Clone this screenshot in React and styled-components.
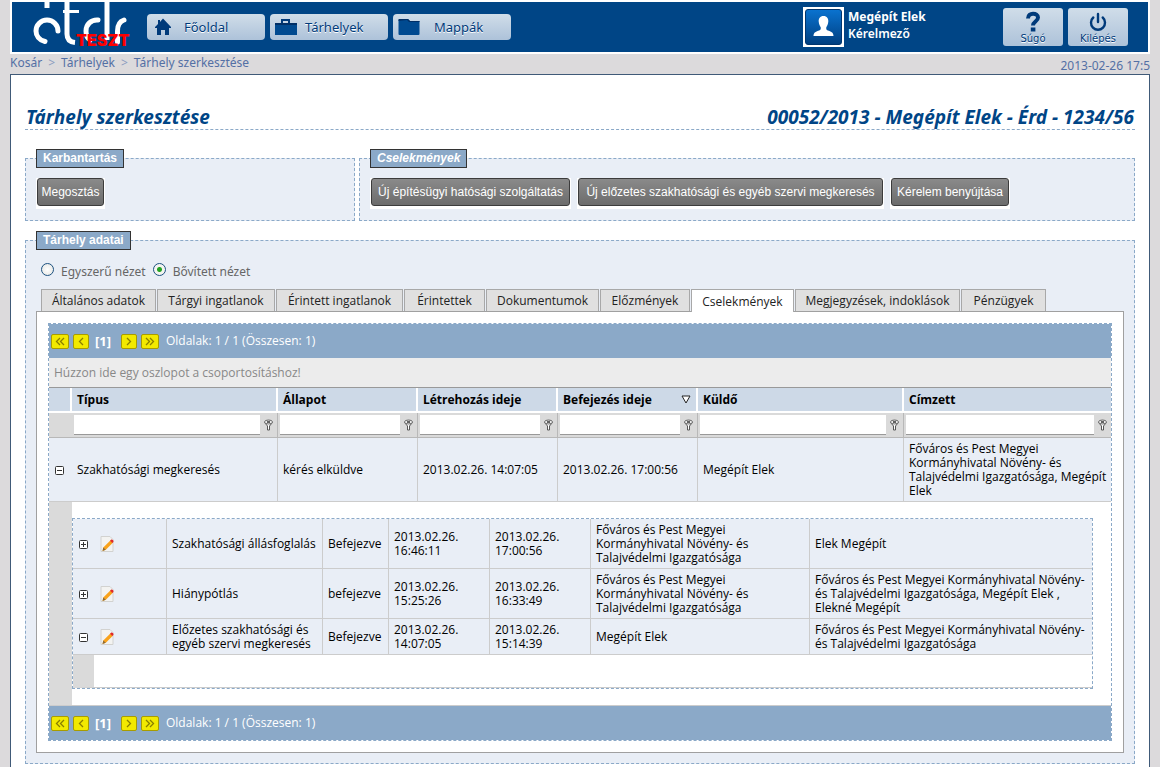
import { useState } from "react";
import styled, { createGlobalStyle, css } from "styled-components";

const GlobalStyle = createGlobalStyle`
  * {
    box-sizing: border-box;
  }

  body {
    margin: 0;
    background: #dcdadc;
    font-family: "Open Sans", Tahoma, sans-serif;
    font-size: 12px;
    line-height: 14px;
    color: #000;
  }

  button,
  input {
    font-family: inherit;
    font-size: inherit;
  }
`;

const Page = styled.div`
  display: flex;
  flex-direction: column;
  min-height: 100vh;
  padding: 0 10px;
`;

const Header = styled.header`
  display: flex;
  align-items: center;
  height: 54px;
  padding-right: 20px;
  background: #004586;
  border: 2px solid #fff;
  font-family: "Noto Sans", sans-serif;
`;

const Logo = styled.a`
  position: relative;
  flex: none;
  width: 135px;
  height: 50px;

  svg {
    display: block;
  }
`;

const LogoBadge = styled.span`
  position: absolute;
  left: 64px;
  top: 30px;
  color: #f00;
  font: 900 16px/16px Inter, "Liberation Sans", sans-serif;
`;

const Nav = styled.nav`
  display: flex;
  gap: 5px;
`;

const raised = css`
  border: 0;
  background: linear-gradient(#d0dde9, #adc2d9);
  color: #003a7a;
  text-shadow: 0 1px 0 #fff;
  cursor: pointer;
`;

const NavButton = styled.button`
  ${raised}
  display: flex;
  align-items: center;
  width: 118px;
  height: 26px;
  padding: 0;
  border-radius: 4px;
  font-size: 13px;

  svg {
    flex: none;
  }
`;

const NavLabel = styled.span`
  padding-left: ${(p) => p.$indent}px;
`;

const User = styled.div`
  display: flex;
  gap: 4px;
  width: 200px;
  margin-left: auto;
  color: #fff;
  font-size: 12px;
  font-weight: 700;
  line-height: 17px;
`;

const UserText = styled.div`
  padding-top: 1px;
`;

const Avatar = styled.span`
  width: 41px;
  height: 40px;
  padding: 2px;
  background: #fff;

  svg {
    display: block;
  }
`;

const UserRole = styled.div`
  font-weight: 600;
`;

const HeaderButtons = styled.div`
  display: flex;
  gap: 5px;
`;

const HeaderButton = styled.button`
  ${raised}
  display: flex;
  flex-direction: column;
  align-items: center;
  width: 60px;
  height: 38px;
  padding: 3px 0 0;
  border-radius: 3px;
  font: 10px/12px "DejaVu Sans", Verdana, sans-serif;
`;

const TopLine = styled.div`
  display: flex;
  justify-content: space-between;
  height: 20px;
  color: #5470a5;
  font-family: "Noto Sans", sans-serif;
  line-height: 18px;
`;

const Crumbs = styled.nav`
  a {
    color: inherit;
    text-decoration: none;
  }

  span {
    margin: 0 6px;
    color: #8b9cc0;
  }
`;

const Clock = styled.time`
  line-height: 24px;
`;

const Content = styled.main`
  flex: 1;
  padding: 31px 14px 3px;
  background: #fff;
  border: 1px solid #405a78;
  border-bottom: 0;
`;

const Titles = styled.div`
  display: flex;
  justify-content: space-between;
  margin-bottom: 19px;
  padding: 0 1px;
  border-bottom: 1px dashed #8ba9c8;
`;

const Title = styled.h1`
  margin: 0;
  color: #004586;
  font-family: "Noto Sans", sans-serif;
  font-size: 19px;
  font-style: italic;
  font-weight: 700;
  line-height: 23px;
`;

const BoxRow = styled.div`
  display: flex;
  gap: 4px;
  margin-bottom: 10px;
`;

const Box = styled.fieldset`
  flex: ${(p) => (p.$width ? `0 0 ${p.$width}px` : "1")};
  min-width: 0;
  margin: 0;
  padding: 10px;
  background: #e9eef6;
  border: 1px dashed #8ba9c8;
`;

const Legend = styled.legend`
  padding: 0 6px;
  background: #8ba9c8;
  border: 1px solid #333;
  color: #fff;
  font: ${(p) => (p.$italic ? "italic" : "normal")} 700 12px/17px
    "Liberation Sans", Arial, sans-serif;
`;

const Actions = styled.div`
  display: flex;
  gap: 6px;
  padding-bottom: 1px;
`;

const ActionFrame = styled.span`
  flex: 0 1 ${(p) => p.$width}px;
  padding: 0 1px 3px;
  background: #fff;
`;

const ActionButton = styled.button`
  display: block;
  width: 100%;
  height: 28px;
  padding: 0;
  background: linear-gradient(#8a8a8a, #6c6c6c);
  border: 1px solid #3c3c3c;
  border-radius: 3px;
  color: #fff;
  font: 12px/14px "Liberation Sans", Arial, sans-serif;
  white-space: nowrap;
  cursor: pointer;
`;

const ViewSwitch = styled.div`
  display: flex;
  gap: 7px;
  height: 29px;
  padding: 2px 5px 0;
  color: #666;
  font-family: "Noto Sans", sans-serif;
  line-height: 19px;
`;

const ViewOption = styled.label`
  display: flex;
  gap: 7px;
`;

const Radio = styled.input`
  appearance: none;
  width: 13px;
  height: 13px;
  margin: 1px 0 0;
  background: radial-gradient(circle, #fff, #e4e4e0);
  border: 1px solid #1c5180;
  border-radius: 50%;

  &:checked {
    background: radial-gradient(circle, #22a322 0 2px, #f4f4f0 3px);
  }
`;

const Tabs = styled.div`
  display: flex;
  gap: 1px;
  padding-left: 5px;
`;

const Tab = styled.button`
  position: relative;
  flex: 0 1 ${(p) => p.$width}px;
  height: ${(p) => (p.$active ? 23 : 22)}px;
  margin-bottom: ${(p) => (p.$active ? -1 : 0)}px;
  padding: 0;
  background: ${(p) => (p.$active ? "#fff" : "#e0e0e0")};
  border: 1px solid #a8a8a8;
  border-bottom: 0;
  color: #222;
  white-space: nowrap;
  cursor: pointer;
`;

const TabPanel = styled.div`
  padding: 11px;
  background: #fff;
  border: 1px solid #a0a0a0;
`;

const Grid = styled.div`
  border: 1px dashed #8ba9c8;
`;

const PagerBar = styled.div`
  display: flex;
  align-items: center;
  height: 34px;
  padding-left: 2px;
  background: #8ba9c8;
  color: #fff;
`;

const PagerButton = styled.button`
  display: flex;
  align-items: center;
  justify-content: center;
  width: ${(p) => (p.$wide ? 18 : 16)}px;
  height: 15px;
  margin-right: 4px;
  padding: 0;
  background: #f2e900;
  border: 1px solid #a89c00;
  border-radius: 2px;
  cursor: pointer;
`;

const CurrentPage = styled.b`
  flex: none;
  width: 28px;
  padding-left: 2px;
  font-size: 13px;
`;

const PagerText = styled.span`
  padding-left: 3px;
`;

const GroupPanel = styled.div`
  padding: 0 5px;
  background: #ececec;
  border-bottom: 1px solid #999;
  color: #888;
  line-height: 29px;
`;

const Table = styled.table`
  width: 100%;
  table-layout: fixed;
  border-collapse: separate;
  border-spacing: 0;
`;

const HeadCell = styled.th`
  height: 25px;
  padding: 0 5px;
  background: #cdd9e7;
  border-right: ${(p) => (p.$last ? 0 : 2)}px solid #fff;
  border-bottom: 2px solid #fff;
  text-align: left;
`;

const HeadLabel = styled.span`
  display: flex;
  align-items: center;
  justify-content: space-between;
`;

const FilterCell = styled.td`
  padding: ${(p) => (p.$empty ? 0 : "2px 0 2px 2px")};
  background: #dadada;
  border-right: ${(p) => (p.$empty || p.$last ? 0 : 1)}px solid #b8b8b8;
  border-bottom: 1px solid #b8b8b8;
`;

const FilterBox = styled.div`
  display: flex;
  align-items: center;
`;

const FilterInput = styled.input`
  flex: 1;
  min-width: 0;
  height: 20px;
  padding: 0 3px;
  background: #fff;
  border: 0;
  border-bottom: 1px solid #999;
`;

const FilterButton = styled.button`
  width: 17px;
  height: 20px;
  padding: 0;
  background: none;
  border: 0;
  line-height: 0;
`;

const Cell = styled.td`
  padding: 4px ${(p) => (p.$open ? 2 : 5)}px 3px 5px;
  background: #e9eef6;
  border-right: ${(p) => (p.$open ? 0 : 1)}px solid #ccc;
  border-bottom: 1px solid #ccc;
`;

const IconRow = styled.div`
  display: flex;
  align-items: center;
  gap: 12px;
  padding-left: 1px;
`;

const IconButton = styled.button`
  padding: 0;
  background: none;
  border: 0;
  line-height: 0;
  cursor: pointer;
`;

const IndentCell = styled.td`
  padding: 0;
  background: #dadada;
  border-bottom: 1px solid #ccc;
`;

const DetailCell = styled.td`
  padding: 16px 18px 16px 0;
  background: #fff;
  border-bottom: 1px solid #ccc;
`;

const SubGrid = styled.div`
  border: 1px dashed #8ba9c8;
`;

const EmptyDetail = styled.div`
  height: 33px;
  border-bottom: 1px solid #ccc;
  border-left: 21px solid #dadada;
`;

const LogoMark = () => (
  <svg width="135" height="50" viewBox="12 2 135 50" fill="none" stroke="#fff" strokeWidth="5">
    <path d="M47 2v6" />
    <path d="M45 41.500c-6-1.500-9-6-9-10.500a11 11 0 0 1 22 0" strokeLinecap="round" />
    <path d="M67 2v32c0 5 3 8 8 8.500" />
    <path d="M63 11.500H79" strokeWidth="3" />
    <path d="M107 2v38" />
    <path d="M98 20c-7-.5-12 4.500-12 11 0 4 1 7 4 9" strokeLinecap="round" />
    <path d="M117.500 42V31c0-6 2-9.500 6.500-11" strokeLinecap="round" />
  </svg>
);

const HomeIcon = () => (
  <svg width="32" height="26" viewBox="0 0 32 26" fill="#003a7a">
    <path d="M16 4.500 24 13v1h-2v7h-4v-5h-4v5h-4v-7H8v-1l3-3V6h2v2z" />
  </svg>
);

const BriefcaseIcon = () => (
  <svg width="32" height="26" viewBox="0 0 32 26">
    <path d="M12 9V6h7v3" fill="none" stroke="#003a7a" strokeWidth="2" />
    <path d="M5 9h22v12H5z" fill="#004a90" />
    <path d="M5 9h22v2H5z" fill="#002f66" />
  </svg>
);

const FolderIcon = () => (
  <svg width="32" height="26" viewBox="0 0 32 26">
    <path d="M5.500 6q0-1 1-1h8.500l2 2h9.500v13q0 1-1 1h-19q-1 0-1-1z" fill="#004a90" />
    <path d="M5.500 7V6q0-1 1-1h8.500l2 2h9.500v1H16l-2-2z" fill="#002f66" />
  </svg>
);

const AvatarIcon = () => (
  <svg width="37" height="36" viewBox="0 0 37 36">
    <defs>
      <linearGradient id="avatar" x1="0" y1="0" x2="0" y2="1">
        <stop offset="0" stopColor="#0a73d0" />
        <stop offset="1" stopColor="#003f80" />
      </linearGradient>
    </defs>
    <rect x="0.500" y="0.500" width="36" height="35" rx="2.500" fill="url(#avatar)" stroke="#00356e" />
    <path
      d="M18.500 7c3.500 0 5 2.500 4.800 5.500-.2 3-1.300 4.500-2 5.800-.3 2 .2 2.700 1.500 3.200 3 1 5.700 1.700 5.700 5.500h-20c0-3.800 2.700-4.500 5.700-5.500 1.300-.5 1.800-1.200 1.500-3.200-.7-1.300-1.800-2.800-2-5.800C13.500 9.500 15 7 18.500 7z"
      fill="#fff"
    />
  </svg>
);

const HelpIcon = () => (
  <svg width="22" height="22" viewBox="0 0 22 22" fill="none">
    <path d="M6 7.500c0-6.500 10-6 10-1 0 4-5 4-5 8" stroke="#003a7a" strokeWidth="4" />
    <path d="M8.800 16.500h4.600v4H8.800z" fill="#003a7a" />
  </svg>
);

const PowerIcon = () => (
  <svg width="22" height="22" viewBox="0 0 22 22" fill="none" stroke="#003a7a" strokeWidth="2.400">
    <path d="M11 3v8" strokeLinecap="round" />
    <path d="M6.300 6.500a7 7 0 1 0 9.400 0" strokeLinecap="round" />
  </svg>
);

const Chevron = ({ double, right }) => (
  <svg width="10" height="9" viewBox="0 0 10 9" fill="none" stroke="#8a7f00" strokeWidth="1.300">
    <g transform={right ? "translate(10 0) scale(-1 1)" : undefined}>
      {double ? <path d="M5 1 1.500 4.500 5 8M9 1 5.500 4.500 9 8" /> : <path d="M7 1 3.500 4.500 7 8" />}
    </g>
  </svg>
);

const FunnelIcon = () => (
  <svg width="11" height="12" viewBox="0 0 11 12">
    <path d="M1.500 3.500 4.500 7v4h2V7l3-3.500z" fill="#fff" stroke="#555" />
    <ellipse cx="5.500" cy="3" rx="4" ry="2" fill="#eee" stroke="#666" />
    <path d="M4 3h3" stroke="#333" strokeWidth="1.500" />
  </svg>
);

const SortIcon = () => (
  <svg width="10" height="9" viewBox="0 0 10 9">
    <path d="M1 1h8L5 8z" fill="#fff" stroke="#222" />
  </svg>
);

const ExpandIcon = ({ open }) => (
  <svg width="9" height="9" viewBox="0 0 9 9" fill="none" stroke="#333">
    <rect x="0.500" y="0.500" width="8" height="8" rx="1" fill="#fff" />
    <path d={open ? "M2 4.500h5" : "M2 4.500h5M4.500 2v5"} />
  </svg>
);

const EditIcon = () => (
  <svg width="14" height="16" viewBox="0 0 14 16">
    <path d="M1 .5h9l3 3v12H1z" fill="#f3f3f1" stroke="#d2d2d0" />
    <path d="m2.500 15 .8-3.500 7-7 2.500 2.300-7 7z" fill="#f9a21a" />
    <path d="m2.500 15 .8-3.500 2.500 2.300z" fill="#8a6a3a" />
    <path d="m10 4.700 1-1c1.200-.7 3 1 2.400 2.200l-1 1z" fill="#e02828" />
  </svg>
);

const tabs = [
  ["Általános adatok", 115],
  ["Tárgyi ingatlanok", 118],
  ["Érintett ingatlanok", 127],
  ["Érintettek", 81],
  ["Dokumentumok", 113],
  ["Előzmények", 90],
  ["Cselekmények", 103],
  ["Megjegyzések, indoklások", 165],
  ["Pénzügyek", 85],
];

const columns = [
  { label: "Típus", width: 206 },
  { label: "Állapot", width: 140 },
  { label: "Létrehozás ideje", width: 140 },
  { label: "Befejezés ideje", width: 140, sorted: true },
  { label: "Küldő", width: 206 },
  { label: "Címzett" },
];

const subWidths = [94, 156, 66, 101, 101, 219];

const office = "Főváros és Pest Megyei Kormányhivatal Növény- és Talajvédelmi Igazgatósága";

const subRows = [
  {
    cells: [
      "Szakhatósági állásfoglalás",
      "Befejezve",
      "2013.02.26. 16:46:11",
      "2013.02.26. 17:00:56",
      office,
      "Elek Megépít",
    ],
  },
  {
    cells: [
      "Hiánypótlás",
      "befejezve",
      "2013.02.26. 15:25:26",
      "2013.02.26. 16:33:49",
      office,
      `${office}, Megépít Elek , Elekné Megépít`,
    ],
  },
  {
    open: true,
    cells: [
      "Előzetes szakhatósági és egyéb szervi megkeresés",
      "Befejezve",
      "2013.02.26. 14:07:05",
      "2013.02.26. 15:14:39",
      "Megépít Elek",
      office,
    ],
  },
];

const Pager = () => (
  <PagerBar>
    <PagerButton $wide aria-label="Első oldal">
      <Chevron double />
    </PagerButton>
    <PagerButton aria-label="Előző oldal">
      <Chevron />
    </PagerButton>
    <CurrentPage>[1]</CurrentPage>
    <PagerButton aria-label="Következő oldal">
      <Chevron right />
    </PagerButton>
    <PagerButton $wide aria-label="Utolsó oldal">
      <Chevron double right />
    </PagerButton>
    <PagerText>Oldalak: 1 / 1 (Összesen: 1)</PagerText>
  </PagerBar>
);

const Action = ({ width, children }) => (
  <ActionFrame $width={width}>
    <ActionButton>{children}</ActionButton>
  </ActionFrame>
);

const SubTable = () => (
  <SubGrid>
    <Table>
      <colgroup>
        {subWidths.map((width, i) => (
          <col key={i} width={width} />
        ))}
        <col />
      </colgroup>
      <tbody>
        {subRows.map((row, i) => (
          <tr key={i}>
            <Cell>
              <IconRow>
                <IconButton aria-label="Részletek">
                  <ExpandIcon open={row.open} />
                </IconButton>
                <IconButton aria-label="Szerkesztés">
                  <EditIcon />
                </IconButton>
              </IconRow>
            </Cell>
            {row.cells.map((text, j) => (
              <Cell key={j} $open={j === row.cells.length - 1}>
                {text}
              </Cell>
            ))}
          </tr>
        ))}
      </tbody>
    </Table>
    <EmptyDetail />
  </SubGrid>
);

function App() {
  const [view, setView] = useState("full");
  const [activeTab, setActiveTab] = useState("Cselekmények");

  return (
    <>
      <GlobalStyle />
      <Page>
        <Header>
          <Logo href="#" aria-label="ÉTDR">
            <LogoMark />
            <LogoBadge>TESZT</LogoBadge>
          </Logo>
          <Nav>
            <NavButton>
              <HomeIcon />
              <NavLabel $indent={5}>Főoldal</NavLabel>
            </NavButton>
            <NavButton>
              <BriefcaseIcon />
              <NavLabel $indent={3}>Tárhelyek</NavLabel>
            </NavButton>
            <NavButton>
              <FolderIcon />
              <NavLabel $indent={9}>Mappák</NavLabel>
            </NavButton>
          </Nav>
          <User>
            <Avatar>
              <AvatarIcon />
            </Avatar>
            <UserText>
              Megépít Elek
              <UserRole>Kérelmező</UserRole>
            </UserText>
          </User>
          <HeaderButtons>
            <HeaderButton>
              <HelpIcon />
              Súgó
            </HeaderButton>
            <HeaderButton>
              <PowerIcon />
              Kilépés
            </HeaderButton>
          </HeaderButtons>
        </Header>

        <TopLine>
          <Crumbs>
            <a href="#">Kosár</a>
            <span>&gt;</span>
            <a href="#">Tárhelyek</a>
            <span>&gt;</span>
            <a href="#">Tárhely szerkesztése</a>
          </Crumbs>
          <Clock>2013-02-26 17:5</Clock>
        </TopLine>

        <Content>
          <Titles>
            <Title>Tárhely szerkesztése</Title>
            <Title as="h2">00052/2013 - Megépít Elek - Érd - 1234/56</Title>
          </Titles>

          <BoxRow>
            <Box $width={330}>
              <Legend>Karbantartás</Legend>
              <Actions>
                <Action width={69}>Megosztás</Action>
              </Actions>
            </Box>
            <Box>
              <Legend $italic>Cselekmények</Legend>
              <Actions>
                <Action width={201}>Új építésügyi hatósági szolgáltatás</Action>
                <Action width={307}>Új előzetes szakhatósági és egyéb szervi megkeresés</Action>
                <Action width={120}>Kérelem benyújtása</Action>
              </Actions>
            </Box>
          </BoxRow>

          <Box>
            <Legend>Tárhely adatai</Legend>
            <ViewSwitch>
              <ViewOption>
                <Radio
                  type="radio"
                  name="view"
                  checked={view === "simple"}
                  onChange={() => setView("simple")}
                />
                Egyszerű nézet
              </ViewOption>
              <ViewOption>
                <Radio
                  type="radio"
                  name="view"
                  checked={view === "full"}
                  onChange={() => setView("full")}
                />
                Bővített nézet
              </ViewOption>
            </ViewSwitch>

            <Tabs>
              {tabs.map(([label, width]) => (
                <Tab
                  key={label}
                  $width={width}
                  $active={label === activeTab}
                  onClick={() => setActiveTab(label)}
                >
                  {label}
                </Tab>
              ))}
            </Tabs>

            <TabPanel>
              <Grid>
                <Pager />
                <GroupPanel>Húzzon ide egy oszlopot a csoportosításhoz!</GroupPanel>
                <Table>
                  <colgroup>
                    <col width={23} />
                    {columns.map((column) => (
                      <col key={column.label} width={column.width} />
                    ))}
                  </colgroup>
                  <thead>
                    <tr>
                      <HeadCell />
                      {columns.map((column) => (
                        <HeadCell key={column.label} $last={!column.width}>
                          <HeadLabel>
                            {column.label}
                            {column.sorted && <SortIcon />}
                          </HeadLabel>
                        </HeadCell>
                      ))}
                    </tr>
                    <tr>
                      <FilterCell $empty />
                      {columns.map((column) => (
                        <FilterCell key={column.label} $last={!column.width}>
                          <FilterBox>
                            <FilterInput type="text" aria-label={column.label} />
                            <FilterButton aria-label="Szűrő">
                              <FunnelIcon />
                            </FilterButton>
                          </FilterBox>
                        </FilterCell>
                      ))}
                    </tr>
                  </thead>
                  <tbody>
                    <tr>
                      <Cell $open>
                        <IconRow>
                          <IconButton aria-label="Részletek">
                            <ExpandIcon open />
                          </IconButton>
                        </IconRow>
                      </Cell>
                      <Cell>Szakhatósági megkeresés</Cell>
                      <Cell>kérés elküldve</Cell>
                      <Cell>2013.02.26. 14:07:05</Cell>
                      <Cell>2013.02.26. 17:00:56</Cell>
                      <Cell>Megépít Elek</Cell>
                      <Cell $open>{`${office}, Megépít Elek`}</Cell>
                    </tr>
                    <tr>
                      <IndentCell />
                      <DetailCell colSpan={6}>
                        <SubTable />
                      </DetailCell>
                    </tr>
                  </tbody>
                </Table>
                <Pager />
              </Grid>
            </TabPanel>
          </Box>
        </Content>
      </Page>
    </>
  );
}

export default App;
